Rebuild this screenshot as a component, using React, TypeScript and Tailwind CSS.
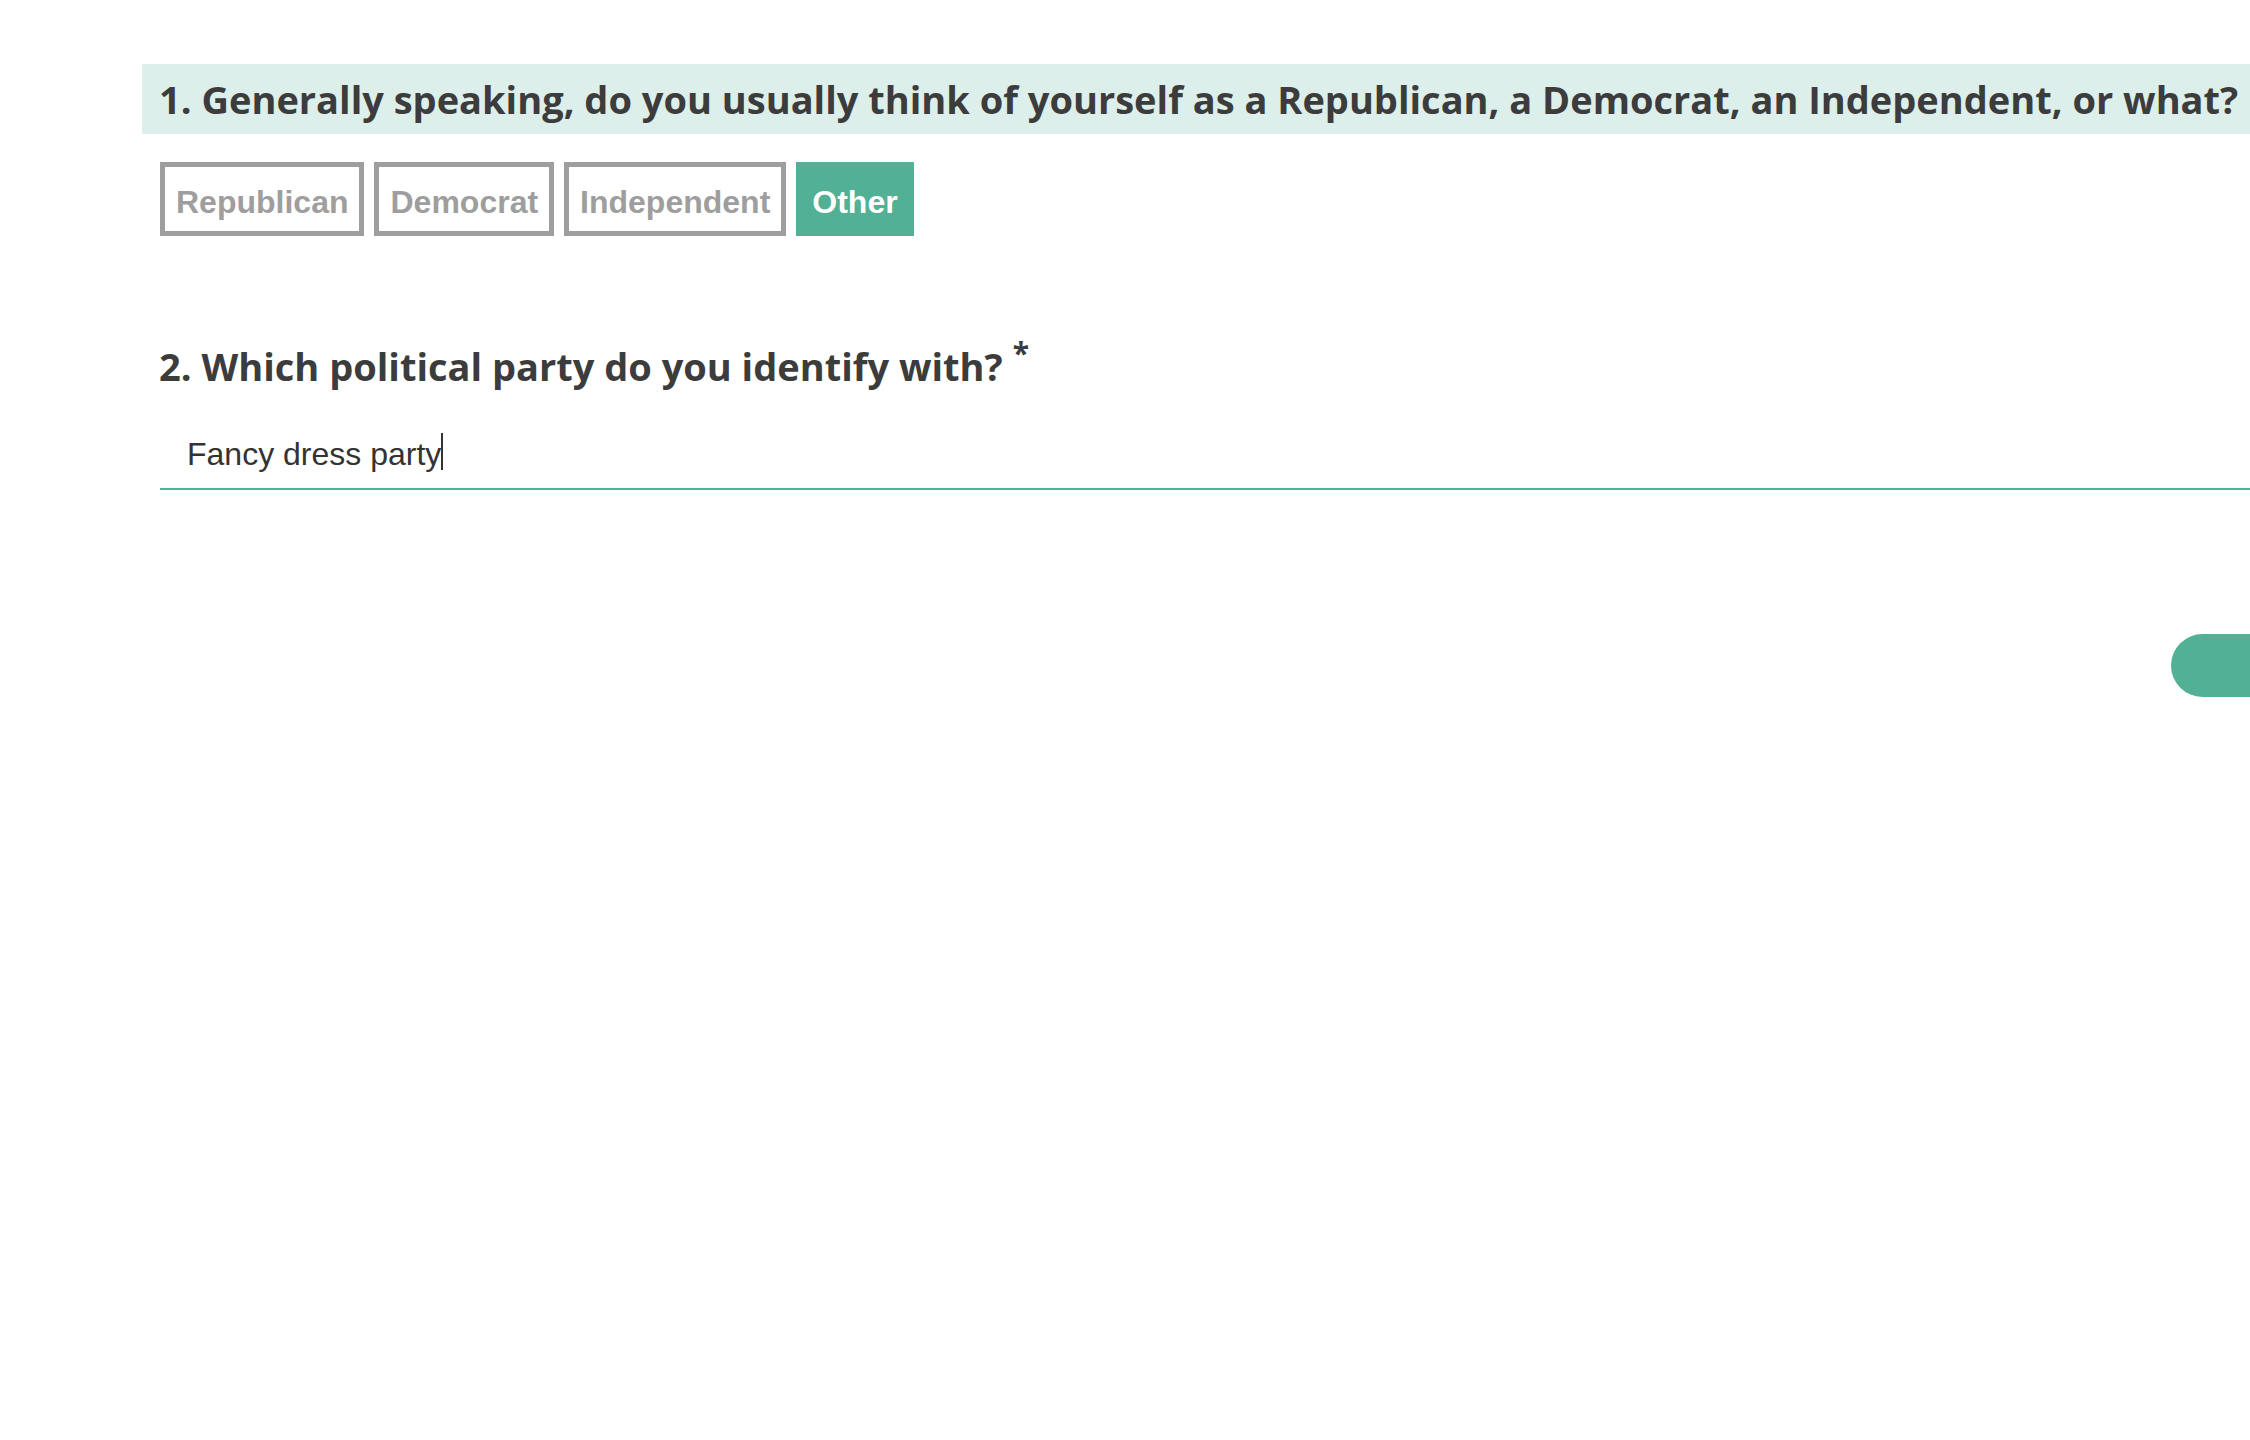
import React from "react";

const options = ["Republican", "Democrat", "Independent", "Other"];

export default function App() {
  const selected = "Other";
  return (
    <div className="w-full h-[1440px] overflow-hidden bg-white">
      <div className="ml-[142px] mt-[64px] w-[2300px]">
        {/* Question 1 */}
        <div className="h-[70px] bg-[#ddefea] pl-[17px] whitespace-nowrap font-['Open_Sans',sans-serif] font-bold text-[38px] leading-[70px] text-[#3c3c3c]">
          1. Generally speaking, do you usually think of yourself as a Republican, a Democrat, an Independent, or what?
        </div>
        <div className="mt-[28px] pl-[18px] flex gap-[10px]">
          {options.map((o) =>
            o === selected ? (
              <button
                key={o}
                className="h-[74px] flex items-center pt-[6px] px-[11px] border-[5px] border-[#52b094] bg-[#52b094] text-white font-['Liberation_Sans',Arial,sans-serif] font-bold text-[32px]"
              >
                {o}
              </button>
            ) : (
              <button
                key={o}
                className="h-[74px] flex items-center pt-[6px] px-[11px] border-[5px] border-[#9e9e9e] bg-white text-[#9e9e9e] font-['Liberation_Sans',Arial,sans-serif] font-bold text-[32px]"
              >
                {o}
              </button>
            )
          )}
        </div>

        {/* Question 2 */}
        <div className="mt-[104px] pl-[17px] flex items-start whitespace-nowrap font-['Open_Sans',sans-serif] font-bold text-[38px] leading-[52px] text-[#3c3c3c]">
          <span>2. Which political party do you identify with?</span>
          <span className="ml-[10px] text-[30px] leading-none mt-[-2px]">*</span>
        </div>
        <div className="mt-[41px] ml-[18px] pl-[27px] pb-[14px] border-b-2 border-[#52b094] font-['Liberation_Sans',Arial,sans-serif] text-[32px] leading-[40px] text-[#333333] whitespace-nowrap">
          <span>Fancy dress party</span>
          <span className="inline-block w-[2px] h-[37px] bg-[#333333] align-[-5px]"></span>
        </div>

        <div className="mt-[144px] flex justify-end">
          <button aria-label="Next" className="w-[271px] h-[63px] rounded-full bg-[#52b094]"></button>
        </div>
      </div>
    </div>
  );
}
